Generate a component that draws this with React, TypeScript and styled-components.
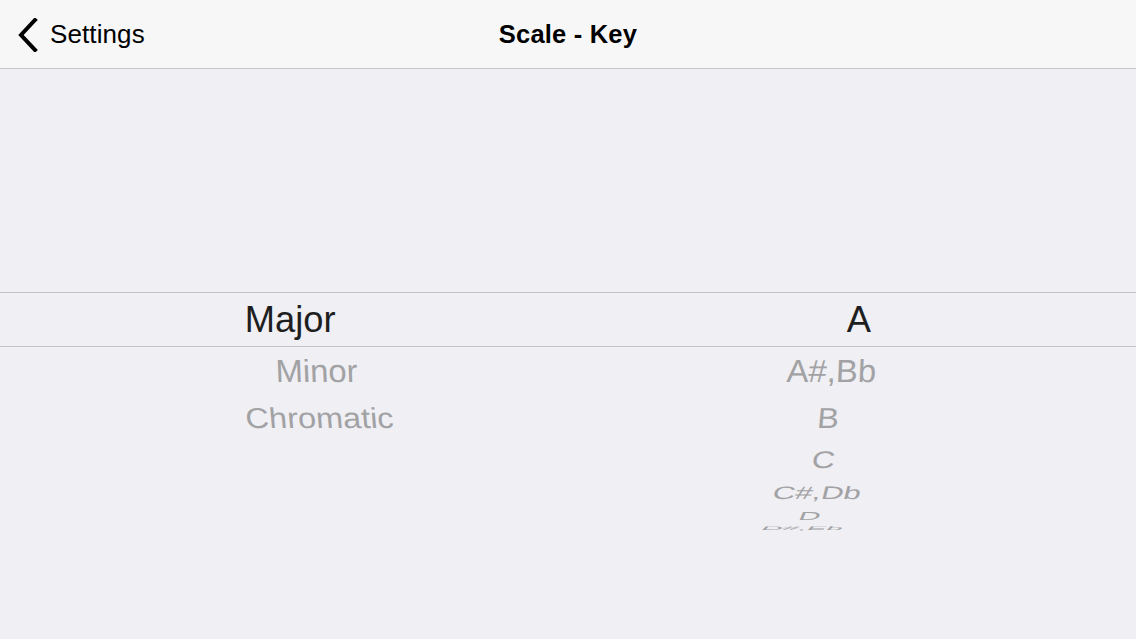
import styled, { createGlobalStyle } from "styled-components";

const GlobalStyle = createGlobalStyle`
	html, body {
		margin: 0;
		padding: 0;
		overflow: hidden;
		background: #efeff4;
		font-family: "Liberation Sans", Helvetica, Arial, sans-serif;
		-webkit-font-smoothing: antialiased;
	}
`;

// wheel geometry: cylinder radius, angle per row, perspective distance
const RADIUS = 250;
const STEP = 11.8;
const DEPTH = 1300;
const MAGNIFY = 1.1;
const LEFT_INSET = 63;
const RIGHT_INSET = 39;

type Side = "left" | "right";

// project a row of the wheel onto the screen (flattened to a 2D matrix,
// linearised around the row centre). xc = row centre relative to the vanishing point
const wheelMatrix = (offset: number, xc: number) => {
	if (offset === 0) {
		return `matrix(${MAGNIFY}, 0, 0, ${MAGNIFY}, ${xc * (MAGNIFY - 1)}, 0)`;
	}
	const t = (offset * STEP * Math.PI) / 180;
	const sin = Math.sin(t);
	const cos = Math.cos(t);
	const d = DEPTH + RADIUS * (1 - cos);
	const s = DEPTH / d;
	const ds = (-s * sin) / d;
	const sy = s * (cos - (RADIUS * sin * sin) / d);
	return `matrix(${s}, 0, ${xc * ds}, ${sy}, ${xc * (s - 1)}, ${RADIUS * sin * s})`;
};

interface WheelProps {
	side: Side;
	items: string[];
	selected: number;
}

const Wheel = ({ side, items, selected }: WheelProps) => {
	const half = (typeof window !== "undefined" ? window.innerWidth : 1136) / 2;
	const xc = side === "left" ? -(half - LEFT_INSET) / 2 : (half - RIGHT_INSET) / 2;
	return (
		<Column side={side}>
			{items.map((label, i) => (
				<Item
					key={label}
					active={i === selected}
					style={{ transform: wheelMatrix(i - selected, xc) }}
				>
					{label}
				</Item>
			))}
		</Column>
	);
};

const ChevronLeft = () => (
	<svg width="22" height="34" viewBox="0 0 22 34" fill="none">
		<path
			d="M17 2 L3 17 L17 32"
			stroke="#000"
			strokeWidth="4"
			strokeLinecap="square"
			strokeLinejoin="miter"
		/>
	</svg>
);

const App = () => {
	return (
		<Page>
			<GlobalStyle />
			<NavBar>
				<BackButton>
					<ChevronLeft />
					<span>Settings</span>
				</BackButton>
				<Title>Scale - Key</Title>
			</NavBar>
			<Picker>
				<WheelRow>
					<Wheel side="left" items={["Major", "Minor", "Chromatic"]} selected={0} />
					<Wheel
						side="right"
						items={["A", "A#,Bb", "B", "C", "C#,Db", "D", "D#,Eb"]}
						selected={0}
					/>
				</WheelRow>
			</Picker>
		</Page>
	);
};

const Page = styled.div`
	display: flex;
	flex-direction: column;
	width: 100vw;
	height: 100vh;
	background: #efeff4;
`;

const NavBar = styled.header`
	position: relative;
	display: flex;
	align-items: center;
	justify-content: center;
	height: 68px;
	flex-shrink: 0;
	background: #f7f7f8;
	border-bottom: 1px solid #c6c6ca;
`;

const BackButton = styled.div`
	position: absolute;
	left: 18px;
	top: 0;
	bottom: 0;
	display: flex;
	align-items: center;
	gap: 10px;
	color: #000;
	font-size: 26px;
	letter-spacing: 0.1px;

	svg {
		margin-top: 1px;
	}
`;

const Title = styled.h1`
	margin: 0;
	font-size: 25.5px;
	font-weight: 700;
	color: #000;
	letter-spacing: 0.2px;
`;

const Picker = styled.main`
	flex: 1;
	padding-top: 223px;
`;

const WheelRow = styled.div`
	display: grid;
	grid-template-columns: 1fr 1fr;
	height: 53px;
	border-top: 1px solid #c4c4c7;
	border-bottom: 1px solid #c4c4c7;
`;

const Column = styled.div<{ side: Side }>`
	display: grid;
	height: 53px;
	padding: ${(p) =>
		p.side === "left" ? `0 0 0 ${LEFT_INSET}px` : `0 ${RIGHT_INSET}px 0 0`};
`;

const Item = styled.div<{ active: boolean }>`
	grid-area: 1 / 1;
	display: flex;
	align-items: center;
	justify-content: center;
	height: 53px;
	font-size: 33px;
	line-height: 53px;
	color: ${(p) => (p.active ? "#1e1e1f" : "#a2a2a4")};
	white-space: nowrap;
`;

export default App;
